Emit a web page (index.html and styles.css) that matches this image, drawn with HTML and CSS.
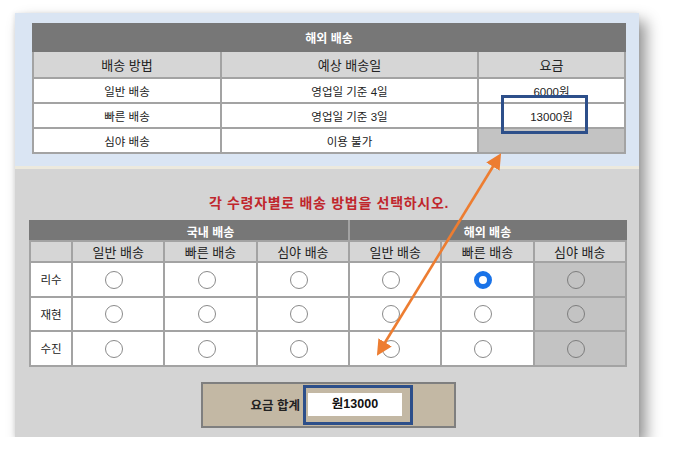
FILE: index.html
```html
<!DOCTYPE html>
<html lang="ko">
<head>
<meta charset="utf-8">
<title>배송 방법 선택</title>
<link rel="stylesheet" href="styles.css">
</head>
<body>
<div class="card">
  <div class="top">
    <table class="intl">
      <colgroup><col class="c1"><col class="c2"><col class="c3"></colgroup>
      <tr class="title"><th colspan="3">해외 배송</th></tr>
      <tr class="head"><th>배송 방법</th><th>예상 배송일</th><th>요금</th></tr>
      <tr class="r1"><td>일반 배송</td><td>영업일 기준 4일</td><td>6000원</td></tr>
      <tr class="r2"><td>빠른 배송</td><td>영업일 기준 3일</td><td>13000원</td></tr>
      <tr class="r3"><td>심야 배송</td><td>이용 불가</td><td class="off"></td></tr>
    </table>
  </div>
  <div class="sep"></div>
  <div class="bottom">
    <p class="notice">각 수령자별로 배송 방법을 선택하시오.</p>
    <table class="choose">
      <colgroup><col class="n"><col class="o"><col class="o"><col class="o"><col class="o"><col class="o"><col class="o"></colgroup>
      <tr class="title"><th></th><th colspan="3" class="dom">국내 배송</th><th colspan="3">해외 배송</th></tr>
      <tr class="head"><th></th><th>일반 배송</th><th>빠른 배송</th><th>심야 배송</th><th>일반 배송</th><th>빠른 배송</th><th>심야 배송</th></tr>
      <tr><td class="name">리수</td><td><span class="radio"></span></td><td><span class="radio"></span></td><td><span class="radio"></span></td><td><span class="radio"></span></td><td><span class="radio on"></span></td><td class="off"><span class="radio"></span></td></tr>
      <tr><td class="name">재현</td><td><span class="radio"></span></td><td><span class="radio"></span></td><td><span class="radio"></span></td><td><span class="radio"></span></td><td><span class="radio"></span></td><td class="off"><span class="radio"></span></td></tr>
      <tr><td class="name">수진</td><td><span class="radio"></span></td><td><span class="radio"></span></td><td><span class="radio"></span></td><td><span class="radio"></span></td><td><span class="radio"></span></td><td class="off"><span class="radio"></span></td></tr>
    </table>
    <div class="total">
      <span class="label">요금 합계</span>
      <div class="mark"><div class="field">원13000</div></div>
    </div>
  </div>
  <div class="hl"></div>
  <svg class="arrow" width="624" height="424" viewBox="0 0 624 424">
    <defs>
      <marker id="ah" markerWidth="6" markerHeight="6" refX="3" refY="3" orient="auto-start-reverse" markerUnits="strokeWidth">
        <path d="M0,0 L6,3 L0,6 Z" fill="#ed7d31"/>
      </marker>
    </defs>
    <line x1="482" y1="147" x2="366" y2="336" stroke="#ed7d31" stroke-width="2.6" marker-start="url(#ah)" marker-end="url(#ah)"/>
  </svg>
</div>
</body>
</html>
```
FILE: styles.css
```css
html, body {
  margin: 0;
  padding: 0;
  background: #ffffff;
}
body {
  padding: 13px 0 0 15px;
  font-family: "Liberation Sans", "Noto Sans CJK KR", sans-serif;
  color: #222;
}
.card {
  position: relative;
  width: 624px;
  height: 424px;
  background: #d4d4d4;
  box-shadow: 7px 8px 14px rgba(0, 0, 0, 0.42), -1px 0 4px rgba(0,0,0,0.08);
  display: flex;
  flex-direction: column;
}
.top {
  background: #dae5f3;
  height: 143px;
  padding: 10px 0 0 17px;
}
.sep {
  height: 3px;
  background: #ece9dd;
}
.bottom {
  flex: 1;
  padding: 0 13px 0 15px;
  display: flex;
  flex-direction: column;
  align-items: center;
}
table {
  border-collapse: collapse;
  table-layout: fixed;
}
th, td {
  padding: 0;
  text-align: center;
  border: 2px solid #a3a3a3;
}
.intl {
  width: 592px;
  height: 130px;
}
.intl .c1 { width: 188px; }
.intl .c2 { width: 257px; }
.intl .c3 { width: 147px; }
.intl .title th {
  height: 25px;
  background: #777777;
  color: #ffffff;
  font-size: 12px;
  font-weight: bold;
  border-color: #777777;
}
.intl .head th {
  height: 25px;
  background: #d6d6d6;
  font-size: 13px;
  font-weight: normal;
}
.intl td {
  background: #ffffff;
  font-size: 11.5px;
  height: 23px;
}
.intl td.off { background: #c3c3c3; }
.notice {
  margin: 24px 0 7px 2px;
  line-height: 20px;
  font-size: 14px;
  letter-spacing: 0.7px;
  font-weight: bold;
  color: #c0262c;
}
.choose {
  width: 596px;
}
.choose .n { width: 42px; }
.choose .o { width: 92.3px; }
.choose .title th {
  height: 18px;
  background: #777777;
  color: #ffffff;
  font-size: 12px;
  font-weight: bold;
  border-color: #777777;
  border-bottom-color: #a3a3a3;
}
.choose .title th.dom { border-right-color: #a3a3a3; }
.choose .head th {
  height: 19px;
  background: #d6d6d6;
  font-size: 13px;
  font-weight: normal;
}
.choose td {
  height: 32.5px;
  background: #ffffff;
}
.choose td.name {
  font-size: 11.5px;
}
.choose td.off { background: #c3c3c3; }
.radio {
  display: inline-block;
  vertical-align: middle;
  width: 18px;
  height: 18px;
  border: 1px solid #8a8a8a;
  border-radius: 50%;
  margin-right: 8px;
  box-sizing: border-box;
}
.choose td.off .radio { border-color: #7d7d7d; }
.radio.on {
  border: 5px solid #1a73e8;
  background: #ffffff;
}
.total {
  margin-top: 15px;
  width: 255px;
  height: 46px;
  box-sizing: border-box;
  border: 2px solid #7f7f7f;
  background: #c3b8a4;
  display: flex;
  align-items: center;
  padding-left: 48px;
}
.label {
  font-size: 12.5px;
  font-weight: bold;
  margin-right: 3px;
  color: #222;
}
.mark {
  border: 3px solid #2d4f8a;
  width: 110px;
  height: 40px;
  box-sizing: border-box;
  padding: 5px 8px 0 2px;
}
.field {
  background: #ffffff;
  height: 23px;
  line-height: 23px;
  font-size: 12.5px;
  font-weight: bold;
  text-align: center;
  color: #111;
}
.hl {
  position: absolute;
  left: 486px;
  top: 82px;
  width: 87px;
  height: 39px;
  box-sizing: border-box;
  border: 3px solid #2d4f8a;
}
.arrow {
  position: absolute;
  left: 0;
  top: 0;
  pointer-events: none;
}
```
